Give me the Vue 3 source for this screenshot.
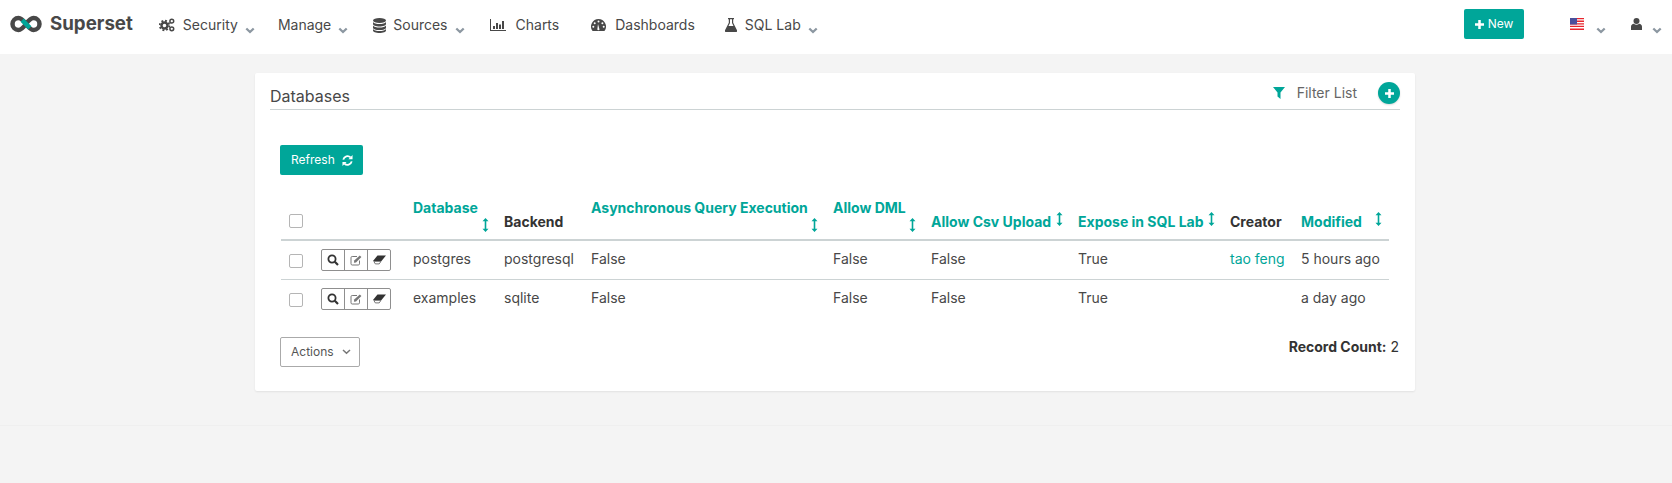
<script setup>
const leftItems = [
  { label: 'Security', icon: 'cogs', caret: true },
  { label: 'Manage', caret: true },
  { label: 'Sources', icon: 'database', caret: true },
  { label: 'Charts', icon: 'chart' },
  { label: 'Dashboards', icon: 'gauge' },
  { label: 'SQL Lab', icon: 'flask', caret: true },
]

const columns = [
  { label: '', width: 32 },
  { label: '', width: 92 },
  { label: 'Database', width: 91, sort: true },
  { label: 'Backend', width: 87 },
  { label: 'Asynchronous Query Execution', width: 242, sort: true },
  { label: 'Allow DML', width: 98, sort: true },
  { label: 'Allow Csv Upload', width: 147, sort: true },
  { label: 'Expose in SQL Lab', width: 152, sort: true },
  { label: 'Creator', width: 71 },
  { label: 'Modified', width: 96, sort: true },
]

const rows = [
  { name: 'postgres', backend: 'postgresql', asyncExec: 'False', dml: 'False', csv: 'False', expose: 'True', creator: 'tao feng', modified: '5 hours ago' },
  { name: 'examples', backend: 'sqlite', asyncExec: 'False', dml: 'False', csv: 'False', expose: 'True', creator: '', modified: 'a day ago' },
]
</script>

<template>
  <div class="page">
    <header class="navbar">
      <a class="brand">
        <svg class="logo" viewBox="0 0 32 18" width="32" height="18">
          <path d="M8.5 3a6 6 0 1 0 0 12c2.6 0 4.6-2 7.500-6s4.900-6 7.500-6a6 6 0 1 1 0 12c-2.600 0-4.600-2-7.500-6s-4.900-6-7.500-6z" fill="none" stroke="#484848" stroke-width="4.500" />
          <path d="M12.200 5.200 19.800 12.800" fill="none" stroke="#00a699" stroke-width="4.500" />
        </svg>
        <span>Superset</span>
      </a>
      <nav class="menu">
        <a v-for="item in leftItems" :key="item.label" class="menu-item" :class="'item-' + item.label.split(' ')[0].toLowerCase()">
          <svg v-if="item.icon === 'cogs'" class="nav-icon" viewBox="0 0 16 14" width="16" height="14">
            <circle cx="5.500" cy="7.500" r="3" fill="none" stroke="#484848" stroke-width="2.400" />
            <circle cx="5.500" cy="7.500" r="4.800" fill="none" stroke="#484848" stroke-width="1.800" stroke-dasharray="1.900 1.870" />
            <circle cx="12.800" cy="3.200" r="1.900" fill="none" stroke="#484848" stroke-width="1.500" />
            <circle cx="12.800" cy="10.800" r="1.900" fill="none" stroke="#484848" stroke-width="1.500" />
          </svg>
          <svg v-else-if="item.icon === 'database'" class="nav-icon" viewBox="0 0 13 15" width="13" height="15">
            <ellipse cx="6.500" cy="2.500" rx="6.500" ry="2.500" fill="#484848" />
            <path d="M0 4v2c0 1.400 2.900 2.500 6.500 2.500S13 7.400 13 6V4c-1 1.400-3.400 2-6.500 2S1 5.400 0 4z" fill="#484848" />
            <path d="M0 7.500v2.200C0 11.100 2.900 12 6.500 12s6.500-.9 6.500-2.300V7.500c-1 1.400-3.400 2.100-6.500 2.100S1 8.900 0 7.500z" fill="#484848" />
            <path d="M0 11v1.500C0 13.900 2.900 15 6.500 15s6.500-1.100 6.500-2.500V11c-1 1.400-3.400 2.100-6.500 2.100S1 12.400 0 11z" fill="#484848" />
          </svg>
          <svg v-else-if="item.icon === 'chart'" class="nav-icon" viewBox="0 0 16 12" width="16" height="12">
            <path d="M0 0h1v11h15v1H0z" fill="#484848" />
            <path d="M3 7h2v3H3zM6 4h2v6H6zM9 5.500h2V10H9zM12 2h2v8h-2z" fill="#484848" />
          </svg>
          <svg v-else-if="item.icon === 'gauge'" class="nav-icon" viewBox="0 0 15 12" width="15" height="12">
            <path d="M7.500 0A7.500 7.500 0 0 0 1.200 11.500l.500.500h11.600l.500-.500A7.500 7.500 0 0 0 7.500 0z" fill="#484848" />
            <circle cx="7.500" cy="2.600" r="1" fill="#fff" />
            <circle cx="3.700" cy="4.200" r="1" fill="#fff" />
            <circle cx="11.400" cy="4.200" r="1" fill="#fff" />
            <circle cx="2.300" cy="7.800" r="1" fill="#fff" />
            <circle cx="12.700" cy="7.800" r="1" fill="#fff" />
            <path d="M6.300 10.500 7 5l1.500 5.500a1.200 1.200 0 0 1-2.200 0z" fill="#fff" />
          </svg>
          <svg v-else-if="item.icon === 'flask'" class="nav-icon" viewBox="0 0 12 14" width="12" height="14">
            <path d="M3 0h6v1.200H8.200v3.500L12 12.200c.4 1-.1 1.800-1 1.800H1c-.9 0-1.400-.8-1-1.800l3.800-7.500V1.200H3z" fill="#484848" />
            <path d="M5 1.200h2v3.800l1.500 3h-5L5 5z" fill="#fff" />
          </svg>
          <span class="menu-label">{{ item.label }}</span>
          <svg v-if="item.caret" class="caret" viewBox="0 0 10 7" width="10" height="7">
            <path d="M1.300 1.500 5 5l3.700-3.500" fill="none" stroke="#8c97a1" stroke-width="2.300" />
          </svg>
        </a>
      </nav>
      <div class="nav-right">
        <a class="btn-new">
          <svg viewBox="0 0 10 10" width="9" height="9"><path d="M3.600 0h2.800v3.600H10v2.800H6.400V10H3.600V6.400H0V3.600h3.600z" fill="#fff" /></svg>
          New
        </a>
        <a class="flag-item">
          <svg class="flag" viewBox="0 0 14 12" width="14" height="12">
            <rect width="14" height="12" fill="#fff" />
            <path d="M0 0h14v1.300H0zM0 2.600h14v1.300H0zM0 5.200h14v1.300H0zM0 7.800h14v1.300H0zM0 10.400h14V12H0z" fill="#e8262d" />
            <rect width="7" height="6.500" fill="#4a4f9c" />
          </svg>
          <svg class="caret" viewBox="0 0 10 7" width="10" height="7">
            <path d="M1.300 1.500 5 5l3.700-3.500" fill="none" stroke="#8c97a1" stroke-width="2.300" />
          </svg>
        </a>
        <a class="user-item">
          <svg viewBox="0 0 11 12" width="11" height="12">
            <circle cx="5.500" cy="3" r="3" fill="#484848" />
            <path d="M0 12V8.800C0 7 1.300 5.700 2.800 5.700c.8.700 1.700 1 2.700 1s1.900-.3 2.700-1C9.700 5.700 11 7 11 8.800V12z" fill="#484848" />
          </svg>
          <svg class="caret" viewBox="0 0 10 7" width="10" height="7">
            <path d="M1.300 1.500 5 5l3.700-3.500" fill="none" stroke="#8c97a1" stroke-width="2.300" />
          </svg>
        </a>
      </div>
    </header>

    <main class="content">
      <section class="panel">
        <div class="panel-heading">
          <h4 class="panel-title">Databases</h4>
          <div class="panel-tools">
            <a class="filter-link">
              <svg viewBox="0 0 12 12" width="12" height="12"><path d="M0 0h12L7.500 5.500V12L4.500 9.500v-4z" fill="#00a699" /></svg>
              <span>Filter List</span>
            </a>
            <a class="add-btn">
              <svg viewBox="0 0 10 10" width="9" height="9"><path d="M3.600 0h2.800v3.600H10v2.800H6.400V10H3.600V6.400H0V3.600h3.600z" fill="#fff" /></svg>
            </a>
          </div>
        </div>

        <a class="btn-refresh">
          Refresh
          <svg viewBox="0 0 12 12" width="11" height="11">
            <path d="M1.400 5A4.700 4.700 0 0 1 9.300 2.700" fill="none" stroke="#fff" stroke-width="2" />
            <path d="M10.600 7A4.700 4.700 0 0 1 2.700 9.300" fill="none" stroke="#fff" stroke-width="2" />
            <path d="M11.500 0v4.500H7zM.5 12V7.500H5z" fill="#fff" />
          </svg>
        </a>

        <table class="db-table">
          <colgroup>
            <col v-for="(col, i) in columns" :key="i" :style="{ width: col.width + 'px' }">
          </colgroup>
          <thead>
            <tr>
              <th v-for="(col, i) in columns" :key="i">
                <span v-if="i === 0" class="checkbox"></span>
                <a v-if="col.sort" class="sort-link">
                  {{ col.label }}
                  <svg class="sort-icon" viewBox="0 0 8 14" width="8" height="14">
                    <path d="M3.200 2.500h1.600v9H3.200z" fill="#00a699" />
                    <path d="M4 0 7 3.200H1zM4 14 1 10.800h6z" fill="#00a699" />
                  </svg>
                </a>
                <template v-else>{{ col.label }}</template>
              </th>
            </tr>
          </thead>
          <tbody>
            <tr v-for="row in rows" :key="row.name">
              <td><span class="checkbox"></span></td>
              <td>
                <div class="btn-group">
                  <a class="btn-icon">
                    <svg viewBox="0 0 12 12" width="12" height="12">
                      <circle cx="5" cy="5" r="3.600" fill="none" stroke="#333" stroke-width="1.800" />
                      <path d="m7.800 7.800 3.200 3.200" stroke="#333" stroke-width="2.200" />
                    </svg>
                  </a>
                  <a class="btn-icon">
                    <svg viewBox="0 0 13 12" width="13" height="12">
                      <path d="M9.500 6.500V9.800a1.200 1.200 0 0 1-1.200 1.200H2.200A1.200 1.200 0 0 1 1 9.800V3.700a1.200 1.200 0 0 1 1.200-1.200H7" fill="none" stroke="#777" stroke-width="1" />
                      <path d="M4.200 6.500 9.800 1.500l1.600 1.600L6 8.400l-2.100.4z" fill="#777" />
                    </svg>
                  </a>
                  <a class="btn-icon">
                    <svg viewBox="0 0 13 10" width="13" height="10">
                      <path d="M4.500.5H13L8.500 6H0z" fill="#333" />
                      <path d="M.8 6.400h7.200L6.200 8.900H2.300z" fill="none" stroke="#555" stroke-width=".8" />
                    </svg>
                  </a>
                </div>
              </td>
              <td>{{ row.name }}</td>
              <td>{{ row.backend }}</td>
              <td>{{ row.asyncExec }}</td>
              <td>{{ row.dml }}</td>
              <td>{{ row.csv }}</td>
              <td>{{ row.expose }}</td>
              <td><a class="creator">{{ row.creator }}</a></td>
              <td>{{ row.modified }}</td>
            </tr>
          </tbody>
        </table>

        <div class="list-footer">
          <a class="btn-actions">
            Actions
            <svg viewBox="0 0 9 6" width="9" height="6">
              <path d="M1 1l3.500 3.300L8 1" fill="none" stroke="#777" stroke-width="1.500" />
            </svg>
          </a>
          <div class="record-count"><strong>Record Count:</strong> 2</div>
        </div>
      </section>
    </main>

    <footer class="page-footer"></footer>
  </div>
</template>

<style>
html, body {
  margin: 0;
  background: #f4f4f4;
}
</style>

<style scoped>
.page {
  font-family: Inter, "Noto Sans", sans-serif;
  font-size: 14px;
  line-height: 20px;
  color: #484848;
  min-height: 483px;
  background: #f4f4f4;
}

.navbar {
  display: flex;
  align-items: center;
  box-sizing: border-box;
  height: 54px;
  padding-bottom: 6px;
  background: #fff;
}

.brand {
  display: flex;
  align-items: center;
  margin-left: 10px;
  font-size: 18.700px;
  font-weight: 700;
}

.brand span {
  margin-left: 8px;
}

.menu {
  display: flex;
  margin-left: 26px;
  padding-top: 2px;
}

.menu-item {
  display: flex;
  align-items: center;
  height: 48px;
}

.nav-icon {
  margin-right: 8px;
}

.item-sources .nav-icon {
  margin-right: 7px;
}

.item-charts .nav-icon {
  margin-right: 10px;
}

.item-dashboards .nav-icon {
  margin-right: 9px;
}

.caret {
  margin: 10px 0 0 7px;
}

.item-manage {
  margin-left: 23px;
}

.item-sources {
  margin-left: 25px;
}

.item-charts {
  margin-left: 25px;
}

.item-dashboards {
  margin-left: 32px;
}

.item-sql {
  margin-left: 30px;
}

.nav-right {
  display: flex;
  align-items: center;
  margin-left: auto;
  margin-right: 10px;
}

.btn-new {
  display: flex;
  align-items: center;
  justify-content: center;
  gap: 4px;
  width: 60px;
  height: 30px;
  border-radius: 2px;
  background: #00a699;
  color: #fff;
  font-size: 12px;
}

.flag-item,
.user-item {
  display: flex;
  align-items: center;
}

.flag-item {
  margin-left: 46px;
}

.user-item {
  margin-left: 25px;
}

.flag-item .caret {
  margin: 12px 0 0 12px;
}

.user-item .caret {
  margin: 12px 0 0 10px;
}

.content {
  width: 1160px;
  margin: 19px 0 0 255px;
}

.panel {
  box-sizing: border-box;
  height: 318px;
  padding: 0 15px;
  background: #fff;
  border-radius: 2px;
  box-shadow: 0 1px 2px rgba(0, 0, 0, 0.08);
}

.panel-heading {
  display: flex;
  align-items: center;
  justify-content: space-between;
  box-sizing: border-box;
  height: 37px;
  padding-top: 4px;
  border-bottom: 1px solid #ccd3d4;
}

.panel-title {
  margin: 6px 0 0;
  font-size: 16px;
  font-weight: 400;
}

.panel-tools {
  display: flex;
  align-items: center;
}

.filter-link {
  display: flex;
  align-items: center;
  gap: 12px;
  color: #666;
  font-size: 14px;
}

.add-btn {
  display: flex;
  align-items: center;
  justify-content: center;
  width: 22px;
  height: 22px;
  margin-left: 21px;
  border-radius: 50%;
  background: #00a699;
  box-shadow: 0 1px 2px rgba(0, 0, 0, 0.15);
}

.btn-refresh {
  display: inline-flex;
  align-items: center;
  gap: 7px;
  box-sizing: border-box;
  height: 30px;
  margin: 35px 0 0 10px;
  padding: 0 10px 0 11px;
  border-radius: 2px;
  background: #00a699;
  color: #fff;
  font-size: 12px;
}

.db-table {
  table-layout: fixed;
  width: 1108px;
  margin: 15px 0 0 11px;
  border-collapse: collapse;
}

th {
  padding: 8px 8px 7px;
  border-bottom: 2px solid #ccd3d4;
  font-weight: 700;
  font-size: 14px;
  line-height: 20px;
  text-align: left;
  vertical-align: bottom;
  color: #333;
}

th .checkbox {
  margin-bottom: 4px;
}

td {
  height: 22px;
  padding: 8px;
  border-bottom: 1px solid #ccd3d4;
  font-size: 14px;
  line-height: 20px;
  vertical-align: middle;
}

td:nth-child(n + 3) {
  padding: 7px 8px 9px;
}

td .checkbox {
  margin-top: 1px;
}

tbody tr:last-child td {
  border-bottom: none;
}

.sort-link {
  color: #00a699;
}

.sort-icon {
  float: right;
  margin-right: -1px;
  padding-left: 3.500px;
}

.checkbox {
  display: block;
  box-sizing: border-box;
  width: 14px;
  height: 14px;
  border: 1px solid #b5b5b5;
  border-radius: 2px;
}

.btn-group {
  display: flex;
  box-sizing: border-box;
  width: 70px;
  height: 22px;
  border: 1px solid #8f8f8f;
  border-radius: 2px;
}

.btn-icon {
  display: flex;
  flex: 1;
  align-items: center;
  justify-content: center;
}

.btn-icon + .btn-icon {
  border-left: 1px solid #8f8f8f;
}

.creator {
  color: #00a699;
}

.list-footer {
  display: flex;
  justify-content: space-between;
  align-items: flex-start;
  margin: 19px 0 0 10px;
  padding-right: 1px;
}

.btn-actions {
  display: flex;
  align-items: center;
  gap: 8px;
  box-sizing: border-box;
  width: 80px;
  height: 30px;
  padding-left: 10px;
  border: 1px solid #aaa;
  border-radius: 2px;
  color: #555;
  font-size: 12px;
}

.record-count {
  font-size: 14px;
  color: #333;
}

.page-footer {
  margin-top: 34px;
  border-top: 1px solid #efefef;
}
</style>
